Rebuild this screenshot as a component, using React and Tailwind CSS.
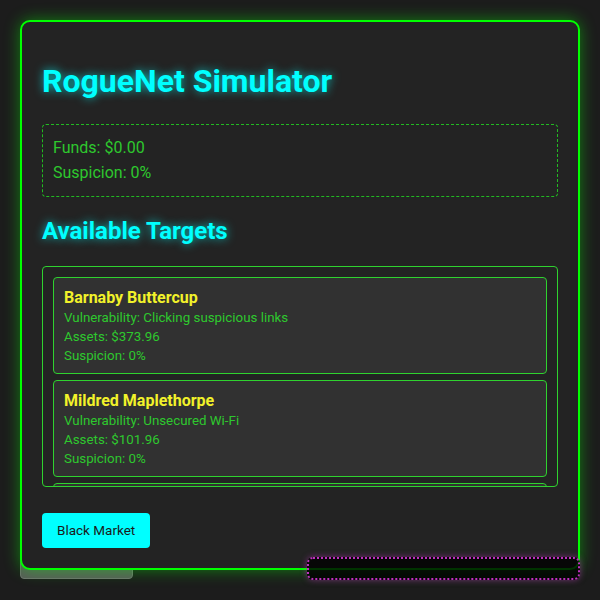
import React from 'react';

const targets = [
  { name: 'Barnaby Buttercup', vuln: 'Clicking suspicious links', assets: '$373.96', suspicion: 0 },
  { name: 'Mildred Maplethorpe', vuln: 'Unsecured Wi-Fi', assets: '$101.96', suspicion: 0 },
  { name: 'Percival Pumpernickel', vuln: 'Reused passwords', assets: '$248.12', suspicion: 0 },
];

const TargetCard = ({ target }) => (
  <div className="shrink-0 bg-[#313131] border border-[#2fd22f] rounded-[4px] px-[10px] pt-[10px] pb-[8px]">
    <div className="text-[16px] leading-[20px] font-bold text-[#f2f22a]">{target.name}</div>
    <div className="text-[13.33px] leading-[19px] text-[#2ec82e]">Vulnerability: {target.vuln}</div>
    <div className="text-[13.33px] leading-[19px] text-[#2ec82e]">Assets: {target.assets}</div>
    <div className="text-[13.33px] leading-[19px] text-[#2ec82e]">Suspicion: {target.suspicion}%</div>
  </div>
);

export default function App() {
  return (
    <div className="relative min-h-[600px] bg-[#1c1c1c] p-5 font-['Roboto',sans-serif]">
      {/* toast peeking out under the panel */}
      <div className="absolute left-[20px] top-[556px] w-[113px] h-[23px] rounded-[4px] bg-[#595c59] border border-[#6e716e]" />

      <div className="relative w-[560px] bg-[#232323] border-2 border-[#00ff00] rounded-[10px] px-5 pt-5 pb-5 shadow-[0_0_16px_rgba(0,255,0,0.45)]">
        <h1 className="mt-[21px] mb-[24px] text-[32px] leading-[37px] font-bold text-[#00ffff] [text-shadow:0_0_10px_rgba(0,255,255,0.7)]">
          RogueNet Simulator
        </h1>

        <div className="border border-dashed border-[#22bb22] rounded-[4px] px-[10px] py-[11px] flex flex-col gap-px text-[16px] leading-6 text-[#2ec82e]">
          <div>Funds: $0.00</div>
          <div>Suspicion: 0%</div>
        </div>

        <h2 className="mt-5 mb-[21px] text-[24px] leading-[28px] font-bold text-[#00ffff] [text-shadow:0_0_10px_rgba(0,255,255,0.7)]">
          Available Targets
        </h2>

        <div className="h-[221px] overflow-hidden border border-[#2fd22f] rounded-[4px] p-[10px] flex flex-col gap-[6px]">
          {targets.map((t) => (
            <TargetCard key={t.name} target={t} />
          ))}
        </div>

        <button className="mt-[26px] h-[35px] px-[15px] bg-[#00ffff] text-[#1a1a1a] text-[13.5px] rounded-[4px]">
          Black Market
        </button>
      </div>

      {/* activity log strip, collapsed */}
      <div className="absolute left-[307px] top-[557px] w-[273px] h-[23px] rounded-[6px] bg-[rgba(0,0,0,0.8)] border-2 border-dotted border-[#c030c0] shadow-[0_0_6px_rgba(200,50,200,0.5)]" />
    </div>
  );
}
